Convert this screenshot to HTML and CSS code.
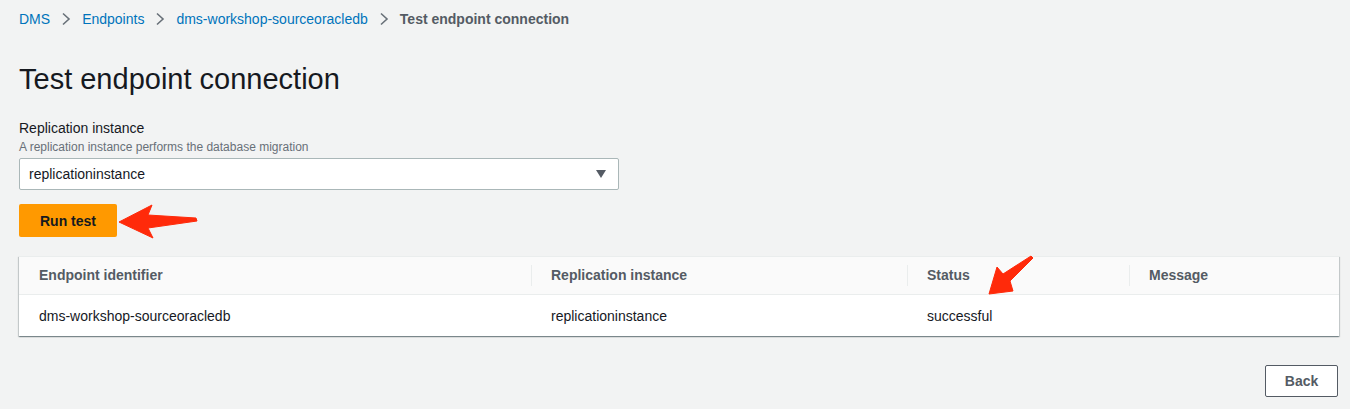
FILE: index.html
```html
<!DOCTYPE html>
<html>
<head>
<meta charset="utf-8">
<link rel="stylesheet" href="styles.css">
</head>
<body>
<div class="page">
  <nav class="crumbs">
    <a class="crumb-link">DMS</a>
    <svg class="sep" width="10" height="14" viewBox="0 0 10 14"><path d="M2 1.5 L8 7 L2 12.5" fill="none" stroke="#687078" stroke-width="1.6"/></svg>
    <a class="crumb-link">Endpoints</a>
    <svg class="sep" width="10" height="14" viewBox="0 0 10 14"><path d="M2 1.5 L8 7 L2 12.5" fill="none" stroke="#687078" stroke-width="1.6"/></svg>
    <a class="crumb-link">dms-workshop-sourceoracledb</a>
    <svg class="sep" width="10" height="14" viewBox="0 0 10 14"><path d="M2 1.5 L8 7 L2 12.5" fill="none" stroke="#687078" stroke-width="1.6"/></svg>
    <span class="crumb-current">Test endpoint connection</span>
  </nav>

  <h1 class="title">Test endpoint connection</h1>

  <div class="field">
    <div class="label">Replication instance</div>
    <div class="desc">A replication instance performs the database migration</div>
    <div class="select">
      <span>replicationinstance</span>
      <svg width="12" height="10" viewBox="0 0 12 10"><path d="M1 1 H11 L6 9 Z" fill="#545b64"/></svg>
    </div>
  </div>

  <div class="run-row">
    <button class="btn-primary">Run test</button>
    <svg class="arrow-left" width="90" height="40" viewBox="0 0 90 40"><path d="M1 20 L34 3 L30 13 L78 16 L79 19 L30 26 L35 36 Z" fill="#ff2a0a" stroke="#ff2a0a" stroke-width="1" stroke-linejoin="round"/></svg>
  </div>

  <div class="table-wrap">
    <div class="table">
      <div class="row head">
        <div class="cell c1">Endpoint identifier</div>
        <div class="cell c2">Replication instance</div>
        <div class="cell c3">Status</div>
        <div class="cell c4">Message</div>
      </div>
      <div class="row body">
        <div class="cell c1">dms-workshop-sourceoracledb</div>
        <div class="cell c2">replicationinstance</div>
        <div class="cell c3">successful</div>
        <div class="cell c4"></div>
      </div>
    </div>
    <svg class="arrow-diag" width="60" height="50" viewBox="0 0 60 50"><path d="M8 39 L16 12 L22 19 L50 1 L52 3 L29 26 L32 36 Z" fill="#ff2a0a" stroke="#ff2a0a" stroke-width="1" stroke-linejoin="round"/></svg>
  </div>

  <div class="footer">
    <button class="btn-normal">Back</button>
  </div>
</div>
</body>
</html>
```
FILE: styles.css
```css
* { box-sizing: border-box; }
html, body { margin: 0; padding: 0; }
body {
  background: #f2f3f3;
  font-family: "Liberation Sans", Arial, sans-serif;
  color: #16191f;
  width: 1350px;
  height: 409px;
  overflow: hidden;
}
.page {
  padding: 10px 12px 0 19px;
}
.crumbs {
  display: flex;
  align-items: center;
  height: 18px;
  font-size: 14px;
}
.crumb-link { color: #0073bb; }
.crumb-current { color: #545b64; font-weight: bold; }
.sep { margin: 0 11px 0 11px; }
.title {
  margin: 34px 0 0 0;
  font-size: 29px;
  font-weight: normal;
  line-height: 34px;
  height: 34px;
}
.field { margin-top: 23px; }
.label { font-size: 14px; line-height: 18px; }
.desc { font-size: 12px; line-height: 16px; color: #687078; margin-top: 2px; }
.select {
  margin-top: 3px;
  width: 600px;
  height: 32px;
  background: #fff;
  border: 1px solid #aab7b8;
  border-radius: 2px;
  display: flex;
  align-items: center;
  justify-content: space-between;
  padding: 0 11px 0 9px;
  font-size: 14px;
}
.run-row {
  margin-top: 14px;
  display: flex;
  align-items: center;
  position: relative;
  height: 33px;
}
.btn-primary {
  width: 98px;
  height: 33px;
  background: #ff9900;
  border: none;
  border-radius: 2px;
  font-family: inherit;
  font-weight: bold;
  font-size: 14px;
  color: #16191f;
  padding: 0;
}
.arrow-left {
  position: absolute;
  left: 99px;
  top: -2px;
}
.table-wrap {
  margin-top: 19px;
  position: relative;
  width: 1320px;
}
.table {
  background: #fff;
  border-top: 1px solid #eaeded;
  box-shadow: 0 1px 1px 0 rgba(0,28,36,0.3), 1px 1px 1px 0 rgba(0,28,36,0.15), -1px 1px 1px 0 rgba(0,28,36,0.15);
}
.row {
  display: grid;
  grid-template-columns: 512px 376px 222px 1fr;
}
.row.head {
  background: #fafafa;
  height: 38px;
  border-bottom: 1px solid #eaeded;
  color: #545b64;
  font-weight: bold;
}
.row.body { height: 41px; }
.cell {
  font-size: 14px;
  display: flex;
  align-items: center;
  padding-left: 20px;
  position: relative;
}
.head .cell { padding-bottom: 1px; }
.head .cell + .cell::before {
  content: "";
  position: absolute;
  left: 0;
  top: 8px;
  bottom: 8px;
  border-left: 1px solid #eaeded;
}
.arrow-diag {
  position: absolute;
  left: 962px;
  top: -1px;
}
.footer {
  display: flex;
  justify-content: flex-end;
  margin-top: 29px;
}
.btn-normal {
  width: 73px;
  height: 32px;
  background: #fff;
  border: 1px solid #545b64;
  border-radius: 2px;
  font-family: inherit;
  font-weight: bold;
  font-size: 14px;
  color: #545b64;
  padding: 0;
}
```
